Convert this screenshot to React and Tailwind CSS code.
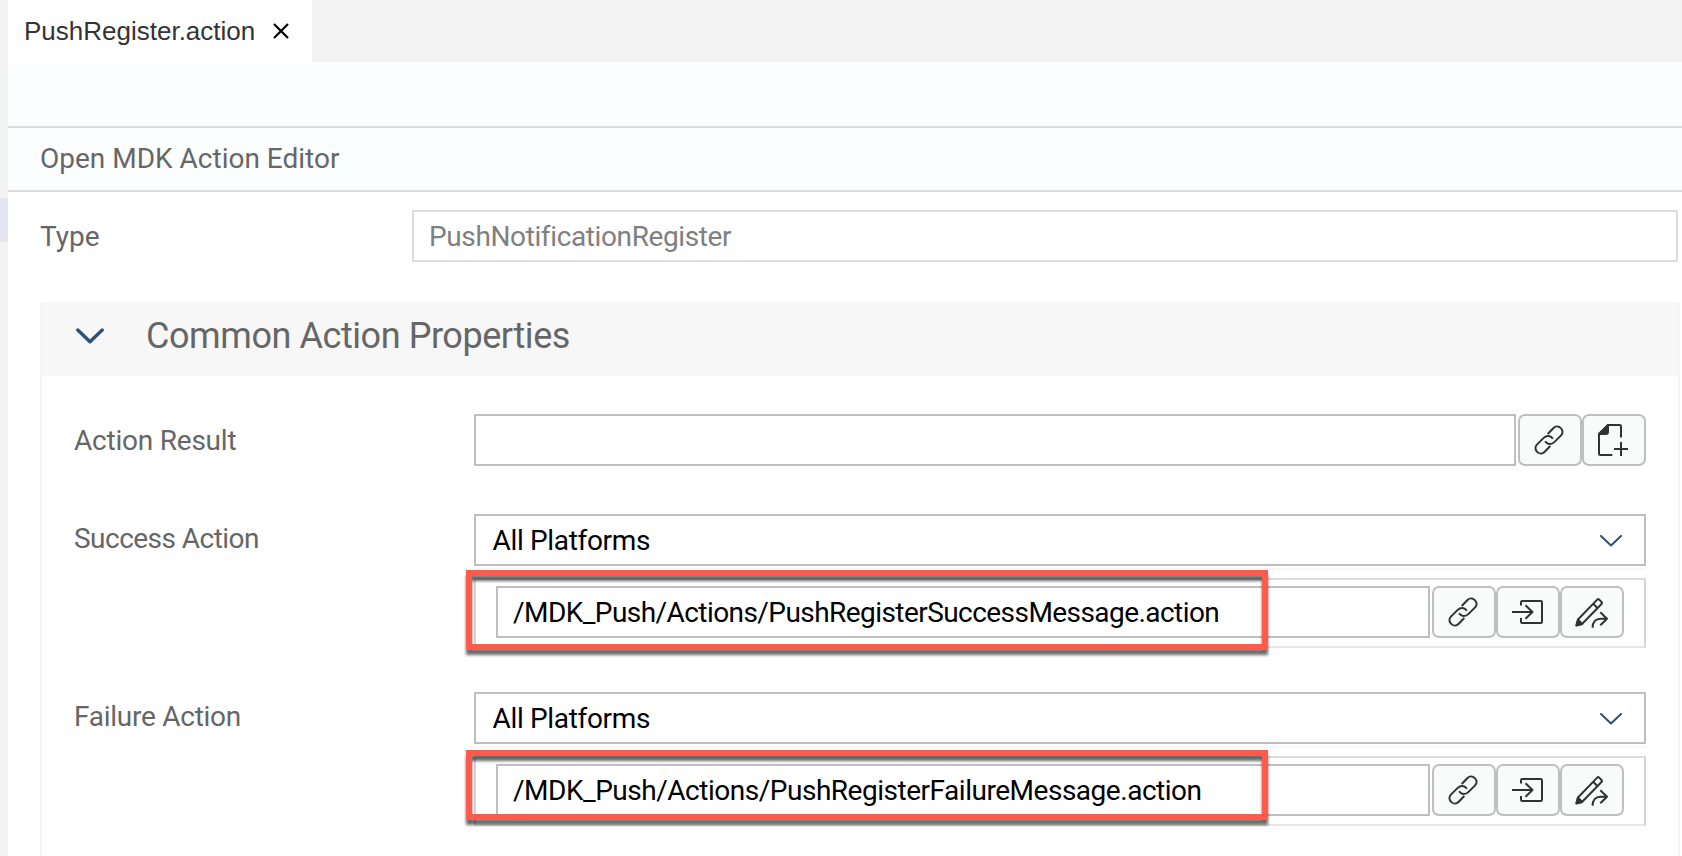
import React from "react";

function IconButton({ children }) {
  return (
    <button className="h-[52px] w-16 shrink-0 rounded-[7px] border-2 border-[#bfbfbf] bg-[#f9fbfa]">
      <svg
        className="block h-12 w-[60px]"
        viewBox="2 2 60 48"
        fill="none"
        stroke="#323232"
        strokeWidth="2"
        strokeLinecap="butt"
        strokeLinejoin="round"
      >
        {children}
      </svg>
    </button>
  );
}

function LinkButton() {
  return (
    <IconButton>
      <path d="M29.7 20l5.8-6c4.7-4.7 12.3 2.6 7.6 7.4L36.3 28.1c-2.8 2.7-7.2 2.4-9.2-.9" />
      <path d="M32.3 32l-5.8 6c-4.7 4.7-12.3-2.6-7.6-7.4L25.7 23.9c2.8-2.7 7.2-2.4 9.2.9" />
    </IconButton>
  );
}

function NewDocumentButton() {
  return (
    <IconButton>
      <path d="M39 23.5V12.3q0-1.3-1.3-1.3H26L17 20v19.7q0 1.3 1.3 1.3h12" />
      <path d="M26 11v7q0 2-2 2h-7z" fill="#323232" />
      <path d="M32 35h14M39 28v14" />
    </IconButton>
  );
}

function OpenButton() {
  return (
    <IconButton>
      <path d="M16 26h20.5M29.5 19.3l7 6.7-7 6.7" />
      <path d="M25 19.5V16.3q0-1.3 1.3-1.3h18.4q1.3 0 1.3 1.3v19.4q0 1.3-1.3 1.3H26.3q-1.3 0-1.3-1.3V32" />
    </IconButton>
  );
}

function EditButton() {
  return (
    <IconButton>
      <path d="M18 33.5L37.2 13.6q1-1 2 0l2.3 2.4q1 1 0 2L22 38l-5 1.3z" />
      <path d="M18 33.5l4 4.5-5.8 1.6z" fill="#323232" />
      <path d="M33.2 17.7l4.4 4.5" />
      <path d="M32.6 41.7c-.3-5.6 3-9 8-9h6M40.3 26.2l6.7 6.5-6.7 6.5" />
    </IconButton>
  );
}

function ActionRow({ label, labelClass, path, pathClass }) {
  return (
    <div className="flex h-[134px]">
      <div className={"h-12 w-[400px] text-[28px] leading-[50px] text-[#666] " + labelClass}>
        {label}
      </div>
      <div className="w-[1172px]">
        <div className="flex h-[52px] items-center justify-between border-2 border-[#bfbfbf] bg-white pl-[16.5px] pr-[21px]">
          <span className="text-[28px] leading-[49px] tracking-[-0.33px] text-black">All Platforms</span>
          <svg className="mt-0.5 h-3 w-6" viewBox="0 0 24 12" fill="none" stroke="#2f5173" strokeWidth="2" strokeLinecap="round" strokeLinejoin="round">
            <path d="M2 1l10 9.5L22 1" />
          </svg>
        </div>
        <div className="mt-0.5 h-0.5 bg-[#f7f7f7]" />
        <div className="mt-2 flex h-[70px] items-start border-2 border-[#d4d4d4] border-t-[#dcdcdc] border-b-[#e6e6e6] pl-5 pt-1.5">
          <div className="mr-0.5 flex h-[52px] w-[934px] items-center border-2 border-[#bfbfbf] bg-white pl-[15px]">
            <span className={"whitespace-nowrap text-[28px] leading-[49px] text-black " + pathClass}>{path}</span>
          </div>
          <LinkButton />
          <OpenButton />
          <EditButton />
        </div>
      </div>
    </div>
  );
}

export default function App() {
  return (
    <div className="relative flex h-[856px] w-[1682px] overflow-hidden bg-white font-[Roboto,sans-serif]">
      <div className="w-2 shrink-0 bg-[#f3f3f3] pt-[198px]">
        <div className="h-11 bg-[#e4e6f1]" />
      </div>

      <div className="min-w-0 flex-1">
        <div className="flex h-[62px] bg-[#f3f3f3]">
          <div className="flex w-[304px] items-center bg-white pl-4">
            <span className="w-[248px] whitespace-nowrap font-['Liberation_Sans',sans-serif] text-[26px] leading-[62px] text-[#333]">
              PushRegister.action
            </span>
            <svg className="h-[18px] w-[18px]" viewBox="0 0 18 18" fill="none" stroke="#000" strokeWidth="2.2">
              <path d="M2 2l14 14M16 2L2 16" />
            </svg>
          </div>
        </div>
        <div className="h-16 bg-[#fcfdfe]" />
        <div className="h-[66px] border-y-2 border-[#d9d9de] bg-[#fcfdfe] pl-8 text-[28px] leading-[61px] text-[#666]">
          Open MDK Action Editor
        </div>

        <div className="flex h-[70px] pl-8 pt-[18px]">
          <div className="w-[372px] text-[28px] leading-[53px] text-[#666]">Type</div>
          <div className="flex h-[52px] w-[1266px] items-center border-2 border-[#ddd] bg-white pl-[15px] text-[28px] leading-[49px] tracking-[-0.38px] text-[#808080]">
            PushNotificationRegister
          </div>
        </div>

        <div className="ml-8 mt-10 h-[554px] w-[1640px] border-x-2 border-[#f5f5f5]">
          <div className="flex h-[74px] items-center bg-[#f7f7f7] pl-[34px]">
            <svg className="mb-[6px] h-[18px] w-7" viewBox="0 0 28 18" fill="none" stroke="#2f5173" strokeWidth="3.4" strokeLinecap="round" strokeLinejoin="round">
              <path d="M1.8 3L14 14.8 26.2 3" />
            </svg>
            <h2 className="ml-[42px] h-[74px] text-[36px] leading-[68px] tracking-[-0.43px] text-[#666]">
              Common Action Properties
            </h2>
          </div>

          <div className="pl-8 pt-[38px]">
            <div className="flex h-[100px]">
              <div className="h-[52px] w-[400px] text-[28px] leading-[53px] tracking-[-0.22px] text-[#666]">Action Result</div>
              <div className="mr-0.5 h-[52px] w-[1042px] border-2 border-[#bfbfbf] bg-white" />
              <LinkButton />
              <NewDocumentButton />
            </div>
            <ActionRow
              label="Success Action"
              labelClass="tracking-[-0.53px]"
              path="/MDK_Push/Actions/PushRegisterSuccessMessage.action"
              pathClass="tracking-[-0.56px]"
            />
            <div className="h-11" />
            <ActionRow
              label="Failure Action"
              labelClass="tracking-[-0.26px]"
              path="/MDK_Push/Actions/PushRegisterFailureMessage.action"
              pathClass="tracking-[-0.48px]"
            />
          </div>
        </div>
      </div>

      <div className="absolute left-[466px] top-[570px] h-20 w-[802px] border-[6px] border-[#ff5a4c] drop-shadow-[0_5px_1.5px_rgba(0,0,0,0.58)]" />
      <div className="absolute left-[466px] top-[750px] h-[70px] w-[802px] border-[6px] border-[#ff5a4c] drop-shadow-[0_5px_1.5px_rgba(0,0,0,0.58)]" />
    </div>
  );
}
